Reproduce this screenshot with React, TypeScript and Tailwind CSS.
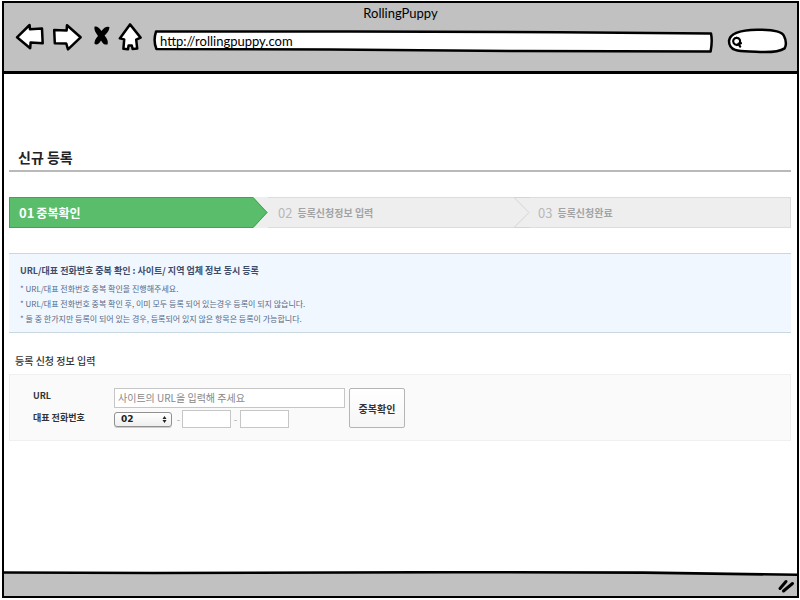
import React from "react";

const SKETCH = "font-['Lato','Noto_Sans',sans-serif]";

function NavButton({ label, box, width, children }: { label: string; box: string; width: string; children: React.ReactNode }) {
  return (
    <button type="button" aria-label={label} className={`h-8 shrink-0 ${width}`}>
      <svg
        viewBox={box}
        className="block h-8 w-full"
        fill="#fff"
        stroke="#000"
        strokeWidth="2.5"
        strokeLinejoin="round"
        strokeLinecap="round"
      >
        {children}
      </svg>
    </button>
  );
}

function BrowserBar() {
  return (
    <header className={`h-[71px] border-b-[3px] border-black bg-[#c1c1c1] text-black ${SKETCH}`}>
      <h1 className="h-5 text-center text-[13px] leading-5">RollingPuppy</h1>
      <div className="flex gap-[7px] pr-[9px] pl-[11px]">
        <NavButton label="Back" box="15 23 30 32" width="w-[30px]">
          <path d="M17 37.3 29.6 25 30 29.3 42 28.6 42.7 43.3 30.6 42.6 30.2 48.2Z" />
        </NavButton>
        <NavButton label="Forward" box="52 23 30 32" width="w-[30px]">
          <path d="M54.2 30 66.6 30.6 67 25.2 80.6 37.3 68 49.4 66.2 43.4 54.8 43.2Z" />
        </NavButton>
        <NavButton label="Stop" box="89 23 22 32" width="w-[22px]">
          <path
            d="M94.600 26.600Q98 25.600 101.400 31Q105.400 25.600 109.400 27Q109.600 31 104.600 35.600Q109 41 107.600 44.400Q103.600 45.400 101 40.400Q98 45.800 94.600 44Q93.800 40.400 98 36Q93.400 30 94.600 26.600Z"
            fill="#000"
            stroke="none"
          />
        </NavButton>
        <NavButton label="Home" box="118 23 24 32" width="w-6">
          <path d="M130 24.4 140.6 37.6 136.2 39.6 137.2 48.6 132.6 49 131.8 45.4 128.6 45.4 128 49.2 123.4 48.8 124.2 39.4 119.8 38.4Z" />
        </NavButton>
        <div className="relative ml-1 h-8 flex-1">
          <svg viewBox="153 23 561 32" preserveAspectRatio="none" className="absolute inset-0 h-full w-full">
            <path
              d="M156 31.6 350 31.6 560 32.200 711 33.4Q712.6 41 710.6 51.4L520 51 330 49.600 156.4 49Q153 41 156 31.6Z"
              fill="#fff"
              stroke="#000"
              strokeWidth="2.5"
              strokeLinejoin="round"
            />
          </svg>
          <input
            type="text"
            aria-label="Address"
            defaultValue="http://rollingpuppy.com"
            className="relative h-8 w-full bg-transparent pt-[3px] pr-3 pl-[7px] text-[13px] outline-none"
          />
        </div>
        <div className="relative ml-[6px] h-8 w-[61px] shrink-0">
          <svg viewBox="727 23 61 32" className="absolute inset-0 h-full w-full">
            <path
              d="M729 41C730 33 742 30 757 29.8C770 29.6 782 31 784 36C786 40 786.400 45 784.600 48.400C779 52 768 52.600 756 51.800C743 51 729 53 729 41Z"
              fill="#fff"
              stroke="#000"
              strokeWidth="2.5"
            />
            <path
              d="M736.600 37.800a3.500 3.500 0 1 0 .1 0M738.400 43.800 740.200 46.600M737 45 741 43.200"
              fill="none"
              stroke="#000"
              strokeWidth="2.2"
              strokeLinecap="round"
            />
          </svg>
          <input type="search" aria-label="Search" className="relative h-8 w-full bg-transparent pt-1 pr-2 pl-5 text-[13px] outline-none" />
        </div>
      </div>
    </header>
  );
}

function Steps() {
  return (
    <ol className="mt-[25px] grid h-[31px] grid-cols-[259fr_262fr_261fr] bg-[#eeeeee] font-bold">
      <li aria-current="step" className="flex text-[12px] text-white">
        <div className="flex flex-1 items-center gap-[2px] border-y border-l border-[#3fa555] bg-[#59bd6b] pl-[9px]">
          <span className="text-[13px]">01</span>
          <span>중복확인</span>
        </div>
        <svg viewBox="0 0 15 31" className="h-[31px] w-[15px] shrink-0">
          <path d="M0 0 14.500 15.500 0 31Z" fill="#59bd6b" />
          <path d="M0 .5 14 15.500 0 30.500" fill="none" stroke="#3fa555" />
        </svg>
      </li>
      <li className="flex text-[10px] text-[#a3a3a3]">
        <div className="flex flex-1 items-center gap-[5px] border-y border-[#dddddd] pl-[10px]">
          <span className="text-[13px] font-normal text-[#b8b8b8]">02</span>
          <span>등록신청정보 입력</span>
        </div>
        <svg viewBox="0 0 16 31" className="h-[31px] w-4 shrink-0">
          <path d="M0 .5 15 15.500 0 30.500M0 .5H16M0 30.500H16" fill="none" stroke="#d4d4d4" />
        </svg>
      </li>
      <li className="flex items-center gap-[5px] border-y border-r border-[#dddddd] pl-2 text-[10px] text-[#a3a3a3]">
        <span className="text-[13px] font-normal text-[#b8b8b8]">03</span>
        <span>등록신청완료</span>
      </li>
    </ol>
  );
}

function Notice() {
  return (
    <section className="mt-[25px] border-y border-[#c9d8e0] bg-[#f1f7fe] pt-[9px] pb-[6px] pl-[11px] text-[#566a85]">
      <h3 className="mb-[2px] text-[9px] leading-4 font-bold text-[#3c4d6c]">
        URL/대표 전화번호 중복 확인 : 사이트/ 지역 업체 정보 동시 등록
      </h3>
      <ul className="text-[8px] leading-[15px]">
        <li>* URL/대표 전화번호 중복 확인을 진행해주세요.</li>
        <li>* URL/대표 전화번호 중복 확인 후, 이미 모두 등록 되어 있는경우 등록이 되지 않습니다.</li>
        <li>* 둘 중 한가지만 등록이 되어 있는 경우, 등록되어 있지 않은 항목은 등록이 가능합니다.</li>
      </ul>
    </section>
  );
}

function RegistrationForm() {
  return (
    <section>
      <h3 className="mt-5 mb-[5px] pl-[6px] text-[10px] leading-4 font-medium text-[#333333]">등록 신청 정보 입력</h3>
      <form
        onSubmit={(event) => event.preventDefault()}
        className="flex gap-1 border border-[#f0f0f0] bg-[#fafafa] pt-[13px] pb-3 pl-[23px]"
      >
        <div className="grid grid-cols-[81px_231px] gap-y-[2px]">
          <label htmlFor="url" className="text-[9px] leading-4 font-bold text-[#333333]">
            URL
          </label>
          <input
            id="url"
            type="text"
            placeholder="사이트의 URL을 입력해 주세요"
            className="h-5 border border-[#c6c6c6] bg-white px-[3px] pb-[2px] text-[10px] outline-none placeholder:text-[#888888]"
          />
          <label htmlFor="area" className="text-[9px] leading-4 font-bold text-[#333333]">
            대표 전화번호
          </label>
          <div className="flex items-center text-[10px] text-[#aaaaaa]">
            <div className="relative mr-[3px]">
              <select
                id="area"
                className="block h-[15px] w-[58px] appearance-none rounded-[3px] border border-[#909090] bg-gradient-to-b from-white to-[#efefef] pl-[6px] font-['DejaVu_Sans',sans-serif] text-[9px] leading-[13px] font-bold text-[#222222] shadow-[0_1px_0_#cccccc] outline-none"
              >
                <option>02</option>
                <option>031</option>
                <option>032</option>
              </select>
              <svg viewBox="0 0 5 7" className="pointer-events-none absolute top-1 right-[5px] h-[7px] w-[5px]" fill="#222">
                <path d="M2.500 0 4.500 3H.5ZM2.500 7 4.500 4H.5Z" />
              </svg>
            </div>
            <span className="w-[7px] text-center leading-[14px]">-</span>
            <input type="tel" aria-label="전화번호 앞자리" className="h-[18px] w-[49px] border border-[#c6c6c6] bg-white px-1 outline-none" />
            <span className="w-[9px] text-center leading-[14px]">-</span>
            <input type="tel" aria-label="전화번호 뒷자리" className="h-[18px] w-[49px] border border-[#c6c6c6] bg-white px-1 outline-none" />
          </div>
        </div>
        <button
          type="submit"
          className="h-10 w-14 rounded-[2px] border border-[#b5b5b5] bg-gradient-to-b from-white to-[#f6f6f6] text-[10px] font-bold text-[#333333]"
        >
          중복확인
        </button>
      </form>
    </section>
  );
}

export default function App() {
  return (
    <div className="flex min-h-screen flex-col bg-white pt-px pr-px pb-[2px] pl-[2px]">
      <div className="flex flex-1 flex-col border-2 border-black">
        <BrowserBar />
        <main className="flex-1 pt-[73px] pr-[6px] pl-[5px] font-['Noto_Sans_CJK_KR',sans-serif]">
          <h2 className="border-b-2 border-[#b9b9b9] pb-[3px] pl-[9px] text-[14px] leading-5 font-bold text-[#222222]">신규 등록</h2>
          <Steps />
          <Notice />
          <RegistrationForm />
        </main>
        <footer className="relative h-[25px] shrink-0">
          <svg viewBox="0 0 793 25" preserveAspectRatio="none" className="absolute inset-0 h-full w-full">
            <path d="M0 1.500 150 2 450 1.200 640 1.600 793 3.800V25H0Z" fill="#c1c1c1" />
            <path d="M0 1.500 150 2 450 1.200 640 1.600 793 3.800" fill="none" stroke="#000" strokeWidth="2.600" />
          </svg>
          <svg viewBox="777 580 18 15" className="absolute right-[2px] bottom-[2px] h-[15px] w-[18px]">
            <path d="M780 589.500 786 582.500M783.500 592 792.500 584.500" fill="none" stroke="#000" strokeWidth="3" strokeLinecap="round" />
          </svg>
        </footer>
      </div>
    </div>
  );
}
